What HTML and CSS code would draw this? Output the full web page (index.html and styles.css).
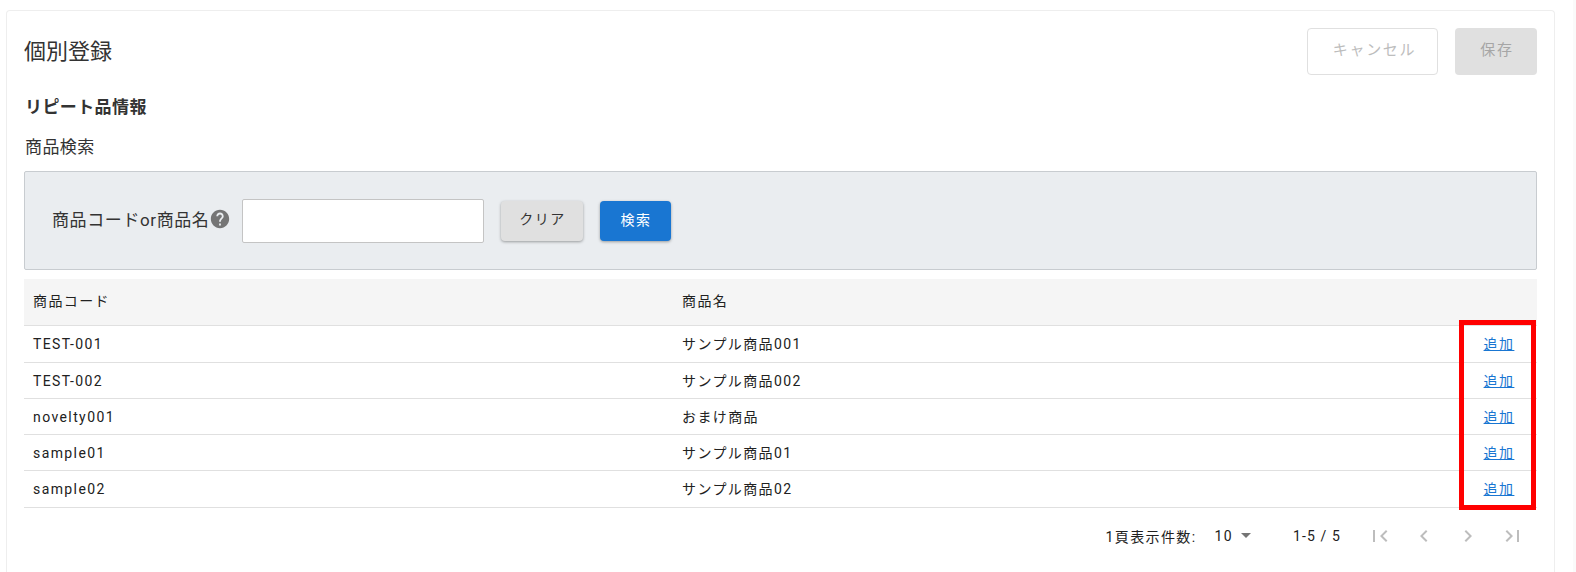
FILE: index.html
```html
<!DOCTYPE html>
<html lang="ja">
<head>
<meta charset="utf-8">
<title>個別登録</title>
<link rel="stylesheet" href="styles.css">
</head>
<body>
<main class="card">
  <header class="head">
    <h1 class="title">個別登録</h1>
    <div class="actions">
      <button class="btn-cancel" type="button">キャンセル</button>
      <button class="btn-save" type="button">保存</button>
    </div>
  </header>
  <h2 class="section">リピート品情報</h2>
  <p class="sub">商品検索</p>
  <section class="panel">
    <label class="field-label">商品コードor商品名</label>
    <svg class="help" viewBox="0 0 24 24" width="22" height="22"><path fill="#757575" d="M12 2C6.48 2 2 6.48 2 12s4.48 10 10 10 10-4.48 10-10S17.52 2 12 2zm1 17h-2v-2h2v2zm2.07-7.75l-.9.92C13.45 12.9 13 13.5 13 15h-2v-.5c0-1.1.45-2.1 1.17-2.83l1.24-1.26c.37-.36.59-.86.59-1.41 0-1.1-.9-2-2-2s-2 .9-2 2H8c0-2.21 1.79-4 4-4s4 1.79 4 4c0 .88-.36 1.68-.93 2.25z"/></svg>
    <input class="input" type="text">
    <button class="btn-clear" type="button">クリア</button>
    <button class="btn-search" type="button">検索</button>
  </section>
  <div class="table-wrap">
    <table class="table">
      <thead>
        <tr><th class="col-code">商品コード</th><th>商品名</th><th class="col-add"></th></tr>
      </thead>
      <tbody>
        <tr><td>TEST-001</td><td>サンプル商品001</td><td class="col-add"><a href="#">追加</a></td></tr>
        <tr><td>TEST-002</td><td>サンプル商品002</td><td class="col-add"><a href="#">追加</a></td></tr>
        <tr><td>novelty001</td><td>おまけ商品</td><td class="col-add"><a href="#">追加</a></td></tr>
        <tr><td>sample01</td><td>サンプル商品01</td><td class="col-add"><a href="#">追加</a></td></tr>
        <tr><td>sample02</td><td>サンプル商品02</td><td class="col-add"><a href="#">追加</a></td></tr>
      </tbody>
    </table>
    <div class="highlight"></div>
  </div>
  <footer class="pager">
    <span class="per-label">1頁表示件数:</span>
    <span class="per-value">10</span>
    <svg class="caret" viewBox="0 0 10 5" width="10" height="5"><path fill="#757575" d="M0 0h10L5 5z"/></svg>
    <span class="range">1-5 / 5</span>
    <div class="nav">
      <svg viewBox="0 0 24 24" width="24" height="24"><path fill="#bdbdbd" d="M19.41 16.59L14.83 12l4.58-4.59L18 6l-6 6 6 6 1.41-1.41zM5 6h2v12H5V6z"/></svg>
      <svg viewBox="0 0 24 24" width="24" height="24"><path fill="#bdbdbd" d="M15.41 7.41L14 6l-6 6 6 6 1.41-1.41L10.83 12z"/></svg>
      <svg viewBox="0 0 24 24" width="24" height="24"><path fill="#bdbdbd" d="M10 6L8.59 7.41 13.17 12l-4.58 4.59L10 18l6-6z"/></svg>
      <svg viewBox="0 0 24 24" width="24" height="24"><path fill="#bdbdbd" d="M5.59 16.59L10.17 12 5.59 7.41 7 6l6 6-6 6-1.41-1.41zM17 6h2v12h-2V6z"/></svg>
    </div>
  </footer>
</main>
</body>
</html>
```
FILE: styles.css
```css
* { box-sizing: border-box; }
html, body { height: 100%; }
body {
  margin: 0;
  padding: 10px 21px 0 6px;
  overflow: hidden;
  background: linear-gradient(to right, #fff 1573px, #fafafa 1573px);
  color: #212121;
  font-family: Roboto, "Noto Sans CJK JP", sans-serif;
}
.card {
  height: 562px;
  padding: 17px 17px 0;
  background: #fff;
  border: 1px solid #eeeeee;
  border-bottom: 0;
  border-radius: 4px 4px 0 0;
}
.head {
  display: flex;
  justify-content: space-between;
  align-items: center;
  height: 47px;
}
.title {
  margin: 0;
  font-size: 22px;
  font-weight: 400;
  line-height: 47px;
  color: #333;
}
.actions { display: flex; gap: 17px; }
.actions button {
  height: 47px;
  padding: 0 0 7px;
  font: inherit;
  font-size: 15px;
  letter-spacing: 1.7px;
  border-radius: 4px;
}
.actions .btn-cancel {
  width: 131px;
  padding-left: 4px;
  background: #fff;
  color: #bdbdbd;
  border: 1px solid #e0e0e0;
}
.actions .btn-save {
  width: 82px;
  padding-left: 2px;
  background: #e0e0e0;
  color: #a6a6a6;
  border: 0;
}
.section {
  margin: 20px 0 0;
  padding-left: 1px;
  font-size: 17px;
  font-weight: 700;
  line-height: 24px;
  letter-spacing: 0.4px;
  color: #333;
}
.sub {
  margin: 16px 0 0;
  padding-left: 1px;
  font-size: 17px;
  line-height: 24px;
  letter-spacing: 0.4px;
  color: #333;
}
.panel {
  display: flex;
  align-items: center;
  height: 99px;
  margin-top: 12px;
  padding-left: 27px;
  background: #eaedf0;
  border: 1px solid #c8ccd0;
  border-radius: 2px;
}
.field-label { font-size: 17px; letter-spacing: 0.6px; color: #333; padding-bottom: 5px; }
.help { margin: 0 11px 3px 0; flex: none; }
.input {
  width: 242px;
  height: 44px;
  margin: 1px 17px 0 0;
  background: #fff;
  border: 1px solid #c4c4c4;
  border-radius: 2px;
}
.btn-clear, .btn-search {
  height: 40px;
  padding: 0 0 6px;
  margin-top: 1px;
  border: 0;
  border-radius: 4px;
  font: inherit;
  font-size: 14px;
  letter-spacing: 0.1em;
  box-shadow: 0 1px 3px rgba(0,0,0,.35);
}
.btn-clear { width: 82px; margin-right: 17px; background: #e0e0e0; color: #333; }
.btn-search { width: 71px; padding-bottom: 4px; background: #1976d2; color: #fff; }
.table-wrap { position: relative; margin-top: 9px; }
.table {
  width: 100%;
  border-collapse: collapse;
  table-layout: fixed;
  font-size: 14px;
  line-height: 20px;
  letter-spacing: 0.1em;
  color: #212121;
}
.table th {
  height: 46px;
  padding: 0 9px 2px;
  background: #f5f5f5;
  border-bottom: 1px solid #e0e0e0;
  font-weight: 400;
  text-align: left;
}
.table td {
  height: 36px;
  padding: 1px 9px 0;
  border-bottom: 1px solid #e0e0e0;
}
.table tr:first-child td { height: 37px; padding-bottom: 1px; }
.table tr:last-child td { height: 37px; }
.col-code { width: 649px; }
.table .col-add { width: 76px; padding-left: 0; padding-right: 0; text-align: center; }
.col-add a { color: #1976d2; }
.highlight {
  position: absolute;
  top: 41px;
  right: 1px;
  width: 77px;
  height: 190px;
  border: 5px solid #ff0000;
  pointer-events: none;
}
.pager {
  display: flex;
  align-items: center;
  justify-content: flex-end;
  height: 56px;
  font-size: 14px;
  letter-spacing: 0.1em;
  color: #212121;
}
.per-value { margin-left: 18px; }
.caret { margin-left: 8px; }
.range { margin-left: 42px; letter-spacing: 1.1px; }
.nav { display: flex; gap: 20px; margin-left: 27px; margin-right: 13px; }
```
